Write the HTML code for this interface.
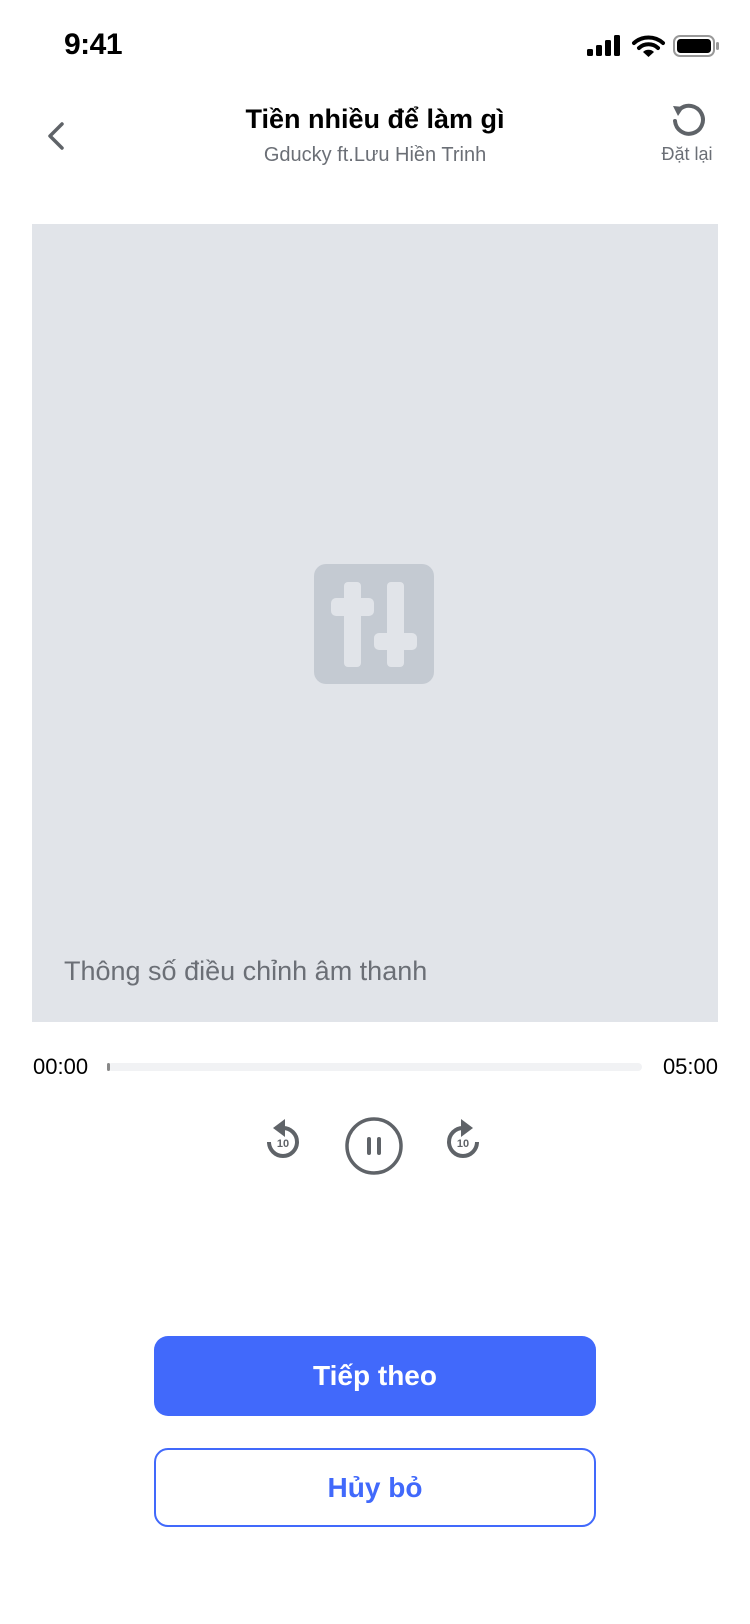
<!DOCTYPE html>
<html><head><meta charset="utf-8"><style>
*{margin:0;padding:0;box-sizing:border-box}
body{width:750px;height:1624px;background:#fff;position:relative;font-family:"Liberation Sans",sans-serif;overflow:hidden}
.a{position:absolute}
</style></head><body>
<div class="a" style="left:64px;top:28px;font-size:30px;font-weight:bold;color:#000;letter-spacing:-0.5px">9:41</div>
<svg class="a" style="left:586px;top:34px" width="134" height="24" viewBox="0 0 134 24">
<rect x="1" y="15" width="6" height="7" rx="1.5" fill="#000"/>
<rect x="10" y="11" width="6" height="11" rx="1.5" fill="#000"/>
<rect x="19" y="6" width="6" height="16" rx="1.5" fill="#000"/>
<rect x="28" y="1" width="6" height="21" rx="1.5" fill="#000"/>
<path d="M48 9a22 22 0 0 1 29 0" stroke="#000" stroke-width="4" fill="none" stroke-linecap="round"/>
<path d="M53 14a14 14 0 0 1 19 0" stroke="#000" stroke-width="4" fill="none" stroke-linecap="round"/>
<path d="M57 18l5.5 5 5.5-5a8 8 0 0 0-11 0z" fill="#000"/>
<rect x="88" y="2" width="40" height="20" rx="6" fill="none" stroke="#999" stroke-width="2"/>
<rect x="91" y="5" width="34" height="14" rx="3.5" fill="#000"/>
<rect x="130" y="8" width="3" height="8" rx="1.5" fill="#999"/>
</svg>
<svg class="a" style="left:44px;top:120px" width="24" height="32" viewBox="0 0 24 32"><path d="M18 4L6 16l12 12" stroke="#5f6368" stroke-width="3.5" fill="none" stroke-linecap="round" stroke-linejoin="round"/></svg>
<div class="a" style="left:0;width:750px;top:104px;text-align:center;font-size:27px;font-weight:bold;color:#000">Tiền nhiều để làm gì</div>
<div class="a" style="left:0;width:750px;top:144px;text-align:center;font-size:20px;color:#6b6f76">Gducky ft.Lưu Hiền Trinh</div>
<svg class="a" style="left:670px;top:101px" width="36" height="36" viewBox="0 0 36 36"><path d="M10 8A14 14 0 1 1 5 20" stroke="#5f6368" stroke-width="4" fill="none" stroke-linecap="round"/><path d="M3 5l11 1-6 9z" fill="#5f6368"/></svg>
<div class="a" style="left:640px;width:94px;top:144px;text-align:center;font-size:18px;color:#6b6f76">Đặt lại</div>
<div class="a" style="left:32px;top:224px;width:686px;height:798px;background:#e1e4e9"></div>
<svg class="a" style="left:314px;top:564px" width="120" height="120" viewBox="0 0 120 120">
<rect width="120" height="120" rx="12" fill="#c4cad2"/>
<rect x="30" y="18" width="17" height="85" rx="4" fill="#e1e4e9"/>
<rect x="17" y="34" width="43" height="18" rx="5" fill="#e1e4e9"/>
<rect x="73" y="18" width="17" height="85" rx="4" fill="#e1e4e9"/>
<rect x="60" y="69" width="43" height="17" rx="5" fill="#e1e4e9"/>
</svg>
<div class="a" style="left:64px;top:956px;font-size:27px;color:#6b6f76">Thông số điều chỉnh âm thanh</div>
<div class="a" style="left:33px;top:1054px;font-size:22px;color:#000">00:00</div>
<div class="a" style="right:32px;top:1054px;font-size:22px;color:#000">05:00</div>
<div class="a" style="left:108px;top:1063px;width:534px;height:8px;border-radius:4px;background:#f1f2f4"></div>
<div class="a" style="left:107px;top:1063px;width:3px;height:8px;border-radius:2px;background:#888"></div>
<svg class="a" style="left:262px;top:1118px" width="42" height="46" viewBox="0 0 42 46">
<path d="M21 10A14 14 0 1 1 7 24" stroke="#5f6368" stroke-width="4" fill="none"/>
<path d="M23 1v18L11 10z" fill="#5f6368"/>
<text x="21" y="29" font-size="11" font-weight="bold" fill="#5f6368" text-anchor="middle" font-family="Liberation Sans">10</text>
</svg>
<svg class="a" style="left:344px;top:1116px" width="60" height="60" viewBox="0 0 60 60">
<circle cx="30" cy="30" r="27" stroke="#5f6368" stroke-width="3.5" fill="none"/>
<rect x="23" y="21" width="4" height="18" rx="2" fill="#5f6368"/>
<rect x="33" y="21" width="4" height="18" rx="2" fill="#5f6368"/>
</svg>
<svg class="a" style="left:442px;top:1118px" width="42" height="46" viewBox="0 0 42 46">
<path d="M21 10A14 14 0 1 0 35 24" stroke="#5f6368" stroke-width="4" fill="none"/>
<path d="M19 1v18l12-9z" fill="#5f6368"/>
<text x="21" y="29" font-size="11" font-weight="bold" fill="#5f6368" text-anchor="middle" font-family="Liberation Sans">10</text>
</svg>
<div class="a" style="left:154px;top:1336px;width:442px;height:80px;border-radius:14px;background:#4169fb;color:#fff;font-size:28px;font-weight:bold;line-height:80px;text-align:center">Tiếp theo</div>
<div class="a" style="left:154px;top:1448px;width:442px;height:79px;border-radius:14px;border:2px solid #4169fb;color:#4169fb;font-size:28px;font-weight:bold;line-height:75px;text-align:center">Hủy bỏ</div>
</body></html>
